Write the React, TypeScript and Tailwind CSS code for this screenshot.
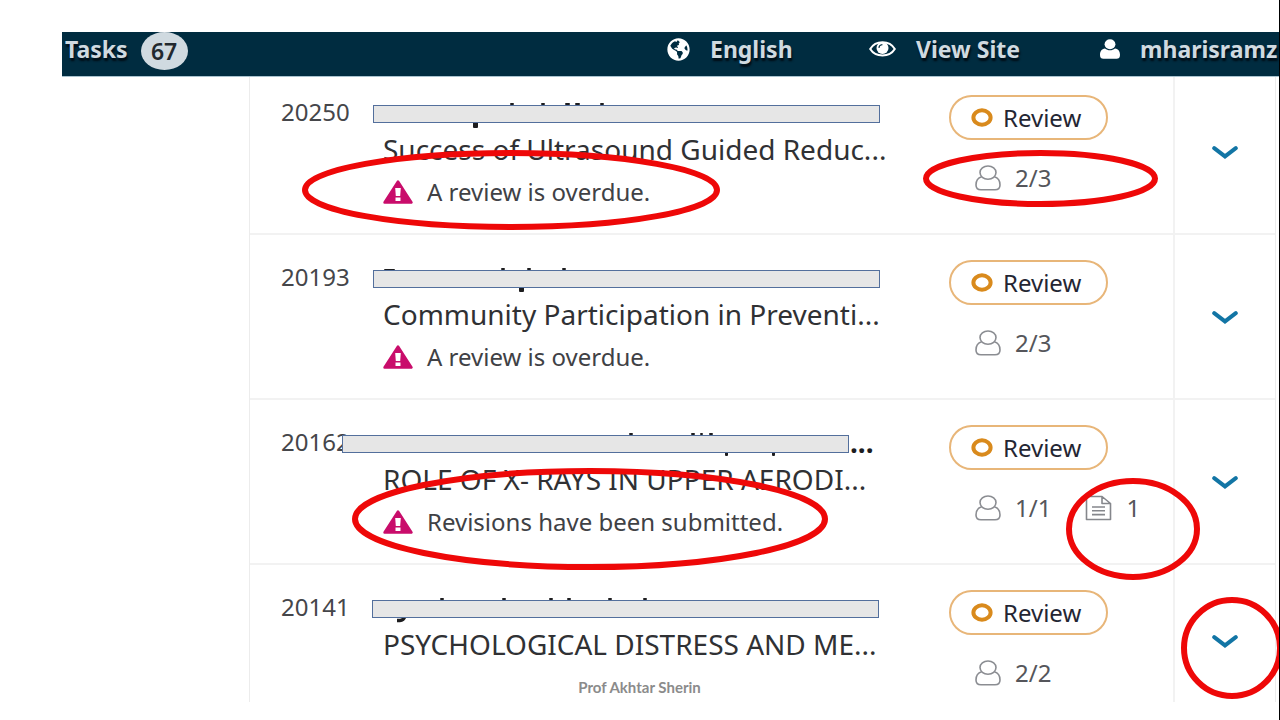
import React from "react";
import { FaGlobeAmericas } from "react-icons/fa";

type Mark = [x: number, y: number, w: number, h: number];

interface Submission {
  id: string;
  title: string;
  notice?: string;
  reviews: string;
  files?: string;
  barClass: string;
  marks: Mark[];
  tail?: string;
  trailing?: boolean;
  noticeRing?: { className: string; w: number; h: number };
  statusRing?: { className: string; w: number; h: number };
  chevronRing?: { className: string; w: number; h: number };
}

const submissions: Submission[] = [
  {
    id: "20250",
    title: "Success of Ultrasound Guided Reduc...",
    notice: "A review is overdue.",
    reviews: "2/3",
    barClass: "-left-2.5",
    marks: [[127, 5, 4, 2], [158, 5, 4, 2], [182, 5, 5, 2], [192, 5, 5, 2], [217, 5, 4, 2], [90, 23, 5, 7]],
    noticeRing: { className: "-left-[81px] top-[73px]", w: 418, h: 80 },
    statusRing: { className: "-left-[26px] top-[73px]", w: 235, h: 57 },
  },
  {
    id: "20193",
    title: "Community Participation in Preventi...",
    notice: "A review is overdue.",
    reviews: "2/3",
    barClass: "-left-2.5",
    marks: [[1, 6, 11, 1], [118, 5, 4, 2], [144, 5, 4, 2], [179, 5, 4, 2], [136, 23, 5, 6]],
  },
  {
    id: "20162",
    title: "ROLE OF X- RAYS IN UPPER AERODI...",
    notice: "Revisions have been submitted.",
    reviews: "1/1",
    files: "1",
    barClass: "-left-[41px]",
    marks: [[246, 5, 4, 2], [308, 5, 4, 2], [317, 5, 3, 2], [326, 5, 4, 2], [342, 24, 3, 4], [389, 24, 3, 4]],
    trailing: true,
    noticeRing: { className: "-left-[31px] top-[68px]", w: 476, h: 102 },
    statusRing: { className: "left-[117px] top-[78px]", w: 134, h: 102 },
  },
  {
    id: "20141",
    title: "PSYCHOLOGICAL DISTRESS AND ME...",
    reviews: "2/2",
    barClass: "-left-[11px]",
    marks: [[57, 5, 4, 2], [119, 5, 4, 2], [166, 5, 4, 2], [184, 5, 4, 2], [225, 5, 4, 2], [260, 5, 4, 2]],
    tail: "M14 27.5 H17 C19.5 27.5 21 26 22 23",
    chevronRing: { className: "left-1.5 top-8", w: 102, h: 102 },
  },
];

function Ring({ className, w, h }: { className: string; w: number; h: number }) {
  return (
    <svg className={`pointer-events-none absolute z-10 ${className}`} width={w} height={h} aria-hidden="true">
      <ellipse cx={w / 2} cy={h / 2} rx={w / 2 - 3} ry={h / 2 - 3} fill="none" stroke="#ee0808" strokeWidth="6" />
    </svg>
  );
}

function WarningIcon() {
  return (
    <svg width="30" height="24" viewBox="0 0 30 24" aria-hidden="true">
      <path d="M15 1.5 L28.5 22.5 H1.5 Z" fill="#c90d6b" stroke="#c90d6b" strokeWidth="2.4" strokeLinejoin="round" />
      <path d="M12.2 8 h5.6 l-.6 8 h-4.4 Z M12.5 17.4 h5 v3.6 h-5 Z" fill="#fff" />
    </svg>
  );
}

function PersonIcon() {
  return (
    <svg width="26" height="26" viewBox="0 0 26 26" fill="none" stroke="#8b8d92" strokeWidth="1.6" aria-hidden="true">
      <ellipse cx="13" cy="7.6" rx="8" ry="6.6" />
      <path d="M6.6 11.8 C3.2 12.8 1 15.6 1 20 C1 23.4 3 24.8 6 24.8 H20 C23 24.8 25 23.4 25 20 C25 15.6 22.8 12.8 19.4 11.8" />
    </svg>
  );
}

function FileIcon() {
  return (
    <svg width="27" height="26" viewBox="0 0 27 26" fill="none" stroke="#85878c" strokeWidth="1.6" aria-hidden="true">
      <path d="M1.5 1.5 H17 L25.5 8.5 V24.5 H1.5 Z M17 1.5 V8.5 H25.5" strokeLinejoin="round" />
      <path d="M7 12 H20 M7 15.8 H20 M7 19.6 H20" />
    </svg>
  );
}

function EyeIcon() {
  return (
    <svg width="27" height="18" viewBox="0 0 27 18" aria-hidden="true">
      <path d="M1.2 9 C6.5 0 20.5 0 25.8 9 C20.5 17.6 6.5 17.6 1.2 9 Z" fill="none" stroke="#fff" strokeWidth="2" />
      <circle cx="13.5" cy="8" r="6" fill="#fff" />
      <path d="M10 8 C10 6 11.4 4.8 13.4 4.6" fill="none" stroke="#002c40" strokeWidth="1.1" />
    </svg>
  );
}

function UserIcon() {
  return (
    <svg width="20" height="20" viewBox="0 0 20 20" fill="#fff" aria-hidden="true">
      <ellipse cx="10" cy="5.2" rx="5.4" ry="5" />
      <path d="M5 9.4 C7.8 11.8 12.2 11.8 15 9.4 C18.4 9.8 20 12.4 20 16 C20 18.8 18.6 19.8 16.6 19.8 H3.4 C1.4 19.8 0 18.8 0 16 C0 12.4 1.6 9.8 5 9.4 Z" />
    </svg>
  );
}

function Row({ item }: { item: Submission }) {
  return (
    <li className="group flex border-b-2 border-[#f2f2f2] last:border-b-0">
      <div className="w-[133px] shrink-0 pl-[31px] pt-6 text-[24px] leading-9 text-[#45464a] group-first:pt-[17px]">
        {item.id}
      </div>
      <div className="relative min-w-0 flex-1 pb-[17px] pt-6 group-first:pt-[17px] group-last:pb-0">
        <div className="relative h-9">
          <svg className="absolute left-0 top-1" width="507" height="32" aria-hidden="true">
            {item.marks.map(([x, y, w, h]) => (
              <rect key={x} x={x} y={y} width={w} height={h} rx="1" fill="#1d1d1f" />
            ))}
            {item.tail && <path d={item.tail} fill="none" stroke="#1d1d1f" strokeWidth="3.5" />}
          </svg>
          <div className={`absolute top-[11px] h-[18px] w-[507px] border border-[#536f9c] bg-[#e6e6e6] ${item.barClass}`} />
          {item.trailing && (
            <span className="absolute left-[467px] top-0 text-[28px] font-bold leading-9 text-[#1d1d1f]">...</span>
          )}
        </div>
        <h2 className="whitespace-nowrap text-[28px] leading-[38px] text-[#303134]">{item.title}</h2>
        {item.notice && (
          <p className="flex h-12 items-center gap-3.5 whitespace-nowrap text-[24px] text-[#404145]">
            <WarningIcon />
            {item.notice}
          </p>
        )}
        {item.noticeRing && <Ring {...item.noticeRing} />}
      </div>
      <div className="relative w-[224px] shrink-0 pb-[11px] pt-[25px] group-first:pt-[18px]">
        <button className="flex h-[45px] w-[159px] items-center gap-2.5 rounded-full border-2 border-[#e8b679] pl-5 text-[24px] leading-8 text-[#242633]">
          <svg width="22" height="20" aria-hidden="true">
            <ellipse cx="11" cy="9.5" rx="8.6" ry="7.2" fill="none" stroke="#d98a1c" strokeWidth="4" />
          </svg>
          Review
        </button>
        <div className="mt-5 flex h-9 items-center pl-[26px] text-[24px] text-[#55565b]">
          <PersonIcon />
          <span className="ml-3.5">{item.reviews}</span>
          {item.files && (
            <span className="ml-[34px] flex items-center gap-3.5">
              <FileIcon />
              {item.files}
            </span>
          )}
        </div>
        {item.statusRing && <Ring {...item.statusRing} />}
      </div>
      <div className="relative w-[102px] shrink-0 border-l-2 border-[#f2f2f2] pt-[71px] group-first:pt-16 group-last:pt-[65px]">
        <button aria-label={`Show details of ${item.id}`} className="mx-auto flex h-6 w-8 items-center justify-center">
          <svg width="26" height="14" viewBox="0 0 26 14" fill="none" aria-hidden="true">
            <path d="M2.2 2.2 L13 10.4 L23.8 2.2" stroke="#1275a5" strokeWidth="4" strokeLinecap="round" />
          </svg>
        </button>
        {item.chevronRing && <Ring {...item.chevronRing} />}
      </div>
    </li>
  );
}

export default function App() {
  return (
    <div className="relative min-h-screen overflow-hidden border-r border-black bg-white pt-8 font-['Noto_Sans',sans-serif]">
      <header className="ml-[62px] flex h-[45px] items-start overflow-hidden whitespace-nowrap border-b border-[#a9c3cf] bg-[#002c40] text-[23px] font-bold leading-[34px] text-[#d0dae0] [text-shadow:1px_3px_2px_#000c14]">
        <a href="#tasks" className="flex items-start gap-[13px] pl-[3px]">
          Tasks
          <span className="flex h-[38px] w-[47px] items-center justify-center rounded-[50%] bg-[#d0dae0] font-semibold text-[#22292e] [text-shadow:none]">
            67
          </span>
        </a>
        <nav className="ml-auto flex">
          <a href="#language" className="flex w-[202px] items-center gap-5">
            <FaGlobeAmericas size={23} color="#fff" />
            English
          </a>
          <a href="#site" className="flex w-[231px] items-center gap-5">
            <EyeIcon />
            View Site
          </a>
          <a href="#account" className="flex w-[179px] items-center gap-5">
            <UserIcon />
            mharisramz
          </a>
        </nav>
      </header>
      <ul className="ml-[249px] mr-[3px] border-x border-[#ececec]">
        {submissions.map((item) => (
          <Row key={item.id} item={item} />
        ))}
      </ul>
      <footer className="absolute inset-x-0 bottom-6 text-center font-['Lato',sans-serif] text-[15px] font-bold leading-[18px] text-[#8b8b8b]">
        Prof Akhtar Sherin
      </footer>
    </div>
  );
}
